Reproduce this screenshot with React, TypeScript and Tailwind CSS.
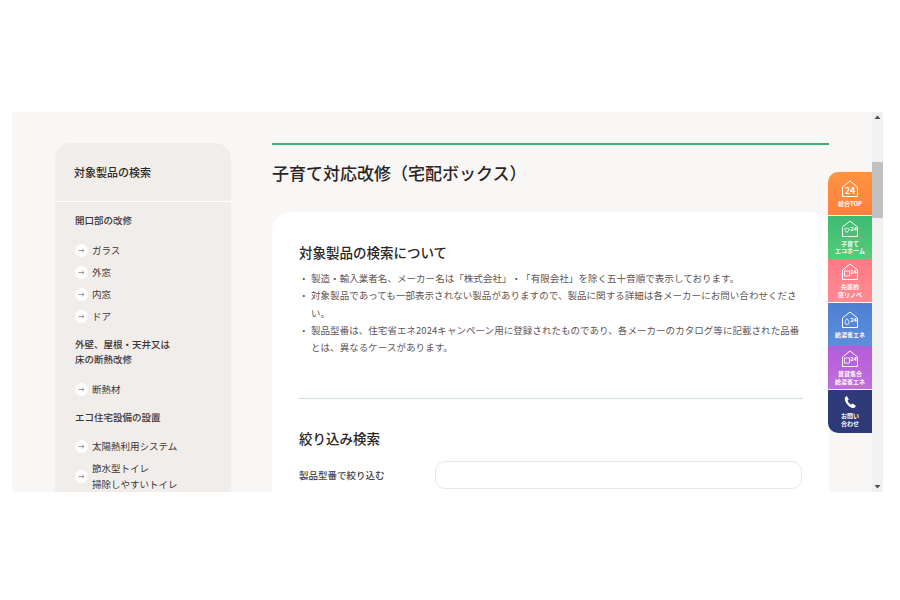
const font = { fontFamily: '"Noto Sans CJK JP", "Noto Sans", sans-serif' };

function HouseIcon({ kind }: { kind: string }) {
  return (
    <svg width="18" height="18" viewBox="0 0 18 18" fill="none" stroke="white" strokeWidth="1" className="shrink-0">
      <path d="M1.5 7 L9 1 L16.5 7 V16.5 H1.5 Z" strokeLinejoin="round" />
      {kind === "top" && (
        <text x="9" y="13.500" textAnchor="middle" fontSize="9" fontWeight="700" fill="white" stroke="none">
          24
        </text>
      )}
      {kind === "heart" && (
        <>
          <path d="M4 10 C3 8 5.500 7.500 6 9 C6.500 7.500 9 8 8 10 L6 12.500 Z" strokeWidth="0.8" />
          <text x="12.500" y="11" textAnchor="middle" fontSize="5.500" fontWeight="700" fill="white" stroke="none">
            24
          </text>
        </>
      )}
      {kind === "window" && (
        <>
          <rect x="3.500" y="8" width="5" height="5" strokeWidth="0.8" />
          <text x="12.500" y="11" textAnchor="middle" fontSize="5.500" fontWeight="700" fill="white" stroke="none">
            24
          </text>
        </>
      )}
      {kind === "drop" && (
        <>
          <path d="M6 7.500 C4.500 9.500 4 10.500 4 11.500 A2 2 0 0 0 8 11.500 C8 10.500 7.500 9.500 6 7.500 Z" strokeWidth="0.8" />
          <text x="12.500" y="11" textAnchor="middle" fontSize="5.500" fontWeight="700" fill="white" stroke="none">
            24
          </text>
        </>
      )}
    </svg>
  );
}

function PhoneIcon() {
  return (
    <svg width="14" height="14" viewBox="0 0 24 24" fill="white" className="shrink-0">
      <path d="M6.600 1.500 L10 7.500 L7.800 9.800 C8.600 12 11 15 13.800 16.500 L16.300 14.500 L22 18.300 C21.200 20.800 19 22.800 16.500 22.300 C9.500 20.800 3 12.500 3 6.500 C3 4 4.500 2.300 6.600 1.500 Z" />
    </svg>
  );
}

function SideLink({ children }: { children: React.ReactNode }) {
  return (
    <div className="flex items-center gap-[4px] text-[9.5px] leading-[16px] text-[#3d3534]">
      <span className="flex h-[13px] w-[13px] shrink-0 items-center justify-center rounded-full bg-white">
        <svg width="7" height="5" viewBox="0 0 7 5" fill="none" stroke="#8a7f7c" strokeWidth="0.8">
          <path d="M0.500 2.500 H6 M4.300 1 L6 2.500 L4.300 4" />
        </svg>
      </span>
      <span>{children}</span>
    </div>
  );
}

function SideHead({ children }: { children: React.ReactNode }) {
  return <div className="text-[9.5px] leading-[15px] font-medium text-[#3d3534]">{children}</div>;
}

function Sidebar() {
  return (
    <aside className="h-[420px] w-[176px] shrink-0 rounded-t-[16px] bg-[#f1edea]">
      <div className="flex h-[59px] items-center border-b-[1.500px] border-white px-[19px] text-[11px] font-medium text-[#2f2928]">
        対象製品の検索
      </div>
      <div className="px-[20px] pt-[11px]">
        <SideHead>開口部の改修</SideHead>
        <div className="mt-[14px] flex flex-col gap-[6px]">
          <SideLink>ガラス</SideLink>
          <SideLink>外窓</SideLink>
          <SideLink>内窓</SideLink>
          <SideLink>ドア</SideLink>
        </div>
        <div className="mt-[13px]">
          <SideHead>
            外壁、屋根・天井又は
            <br />
            床の断熱改修
          </SideHead>
        </div>
        <div className="mt-[14px]">
          <SideLink>断熱材</SideLink>
        </div>
        <div className="mt-[13px]">
          <SideHead>エコ住宅設備の設置</SideHead>
        </div>
        <div className="mt-[13px] flex flex-col gap-[6px]">
          <SideLink>太陽熱利用システム</SideLink>
          <SideLink>
            節水型トイレ
            <br />
            掃除しやすいトイレ
          </SideLink>
        </div>
      </div>
    </aside>
  );
}

const tabs = [
  { kind: "top", lines: ["総合TOP"], cls: "h-[43px] rounded-tl-[10px] bg-gradient-to-b from-[#ff9440] to-[#ff7f3e]" },
  { kind: "heart", lines: ["子育て", "エコホーム"], cls: "h-[43px] bg-gradient-to-b from-[#3dbb73] to-[#54cd78]" },
  { kind: "window", lines: ["先進的", "窓リノベ"], cls: "h-[43px] bg-gradient-to-b from-[#ff7a86] to-[#ff8a92]" },
  { kind: "drop", lines: ["給湯省エネ"], cls: "h-[43px] bg-gradient-to-b from-[#4f7fd2] to-[#5b8fdc]" },
  { kind: "window", lines: ["賃貸集合", "給湯省エネ"], cls: "h-[43px] bg-gradient-to-b from-[#b45cd8] to-[#c06fdc]" },
];

function SideTabs() {
  return (
    <nav className="absolute top-[60px] right-0 flex w-[44px] flex-col gap-[0.6px]">
      {tabs.map((t, i) => (
        <div key={i} className={`flex flex-col items-center justify-center text-white ${t.cls}`}>
          <HouseIcon kind={t.kind} />
          <div className="mt-[2px] text-center text-[6px] leading-[7.500px] font-bold">
            {t.lines.map((l) => (
              <div key={l}>{l}</div>
            ))}
          </div>
        </div>
      ))}
      <div className="flex h-[43px] flex-col items-center justify-center rounded-bl-[10px] bg-[#2f3a78] text-white">
        <PhoneIcon />
        <div className="mt-[3px] text-center text-[6px] leading-[7.500px] font-bold">
          <div>お問い</div>
          <div>合わせ</div>
        </div>
      </div>
    </nav>
  );
}

function Notes() {
  const items = [
    "製造・輸入業者名、メーカー名は「株式会社」・「有限会社」を除く五十音順で表示しております。",
    "対象製品であっても一部表示されない製品がありますので、製品に関する詳細は各メーカーにお問い合わせください。",
    "製品型番は、住宅省エネ2024キャンペーン用に登録されたものであり、各メーカーのカタログ等に記載された品番とは、異なるケースがあります。",
  ];
  return (
    <ul className="mt-[8px] text-[9.500px] leading-[17.300px] tracking-[0.05px] text-[#5f5554]">
      {items.map((text) => (
        <li key={text} className="flex">
          <span className="w-[12px] shrink-0">・</span>
          <span className="w-[492px]">{text}</span>
        </li>
      ))}
    </ul>
  );
}

function MainColumn() {
  return (
    <main className="w-[557px] shrink-0">
      <div className="h-[2px] bg-[#3fae78]" />
      <h1 className="mt-[16px] text-[17px] leading-[24px] font-medium text-[#2b2625]">
        子育て対応改修（宅配ボックス）
      </h1>
      <section className="mt-[27px] h-[400px] rounded-t-[20px] bg-white px-[27px] pt-[30px]">
        <h2 className="text-[13.500px] leading-[20px] font-medium text-[#2b2625]">対象製品の検索について</h2>
        <Notes />
        <div className="mt-[42px] h-px w-[504px] bg-[#cfe0de]" />
        <h2 className="mt-[29px] text-[13.500px] leading-[20px] font-medium text-[#2b2625]">絞り込み検索</h2>
        <div className="mt-[13px] flex items-center">
          <label className="w-[136px] shrink-0 text-[9.500px] font-medium text-[#4a4140]">製品型番で絞り込む</label>
          <input className="h-[28px] w-[368px] rounded-[10px] border border-[#e6e8e8] bg-white" />
        </div>
      </section>
    </main>
  );
}

function Scrollbar() {
  return (
    <div className="flex w-[11px] shrink-0 flex-col items-center bg-[#f1f1f1]">
      <svg width="7" height="5" viewBox="0 0 7 5" className="mt-[3px] shrink-0">
        <path d="M3.500 0.500 L6.500 4 H0.500 Z" fill="#505050" />
      </svg>
      <div className="mt-[42px] h-[56px] w-[11px] bg-[#c1c1c1]" />
      <div className="flex-1" />
      <svg width="7" height="5" viewBox="0 0 7 5" className="mb-[3px] shrink-0">
        <path d="M0.500 1 H6.500 L3.500 4.500 Z" fill="#505050" />
      </svg>
    </div>
  );
}

export default function App() {
  return (
    <div className="h-[600px] w-[900px] bg-white pt-[112px] pl-[12px] [text-spacing-trim:space-all]" style={font}>
      <div className="relative flex h-[380px] w-[871px] overflow-hidden bg-[#f9f7f5]">
        <div className="flex flex-1 gap-[41px] overflow-hidden pt-[31px] pl-[43px]">
          <Sidebar />
          <MainColumn />
        </div>
        <Scrollbar />
        <div className="absolute top-0 right-[11px] h-full">
          <SideTabs />
        </div>
      </div>
    </div>
  );
}
